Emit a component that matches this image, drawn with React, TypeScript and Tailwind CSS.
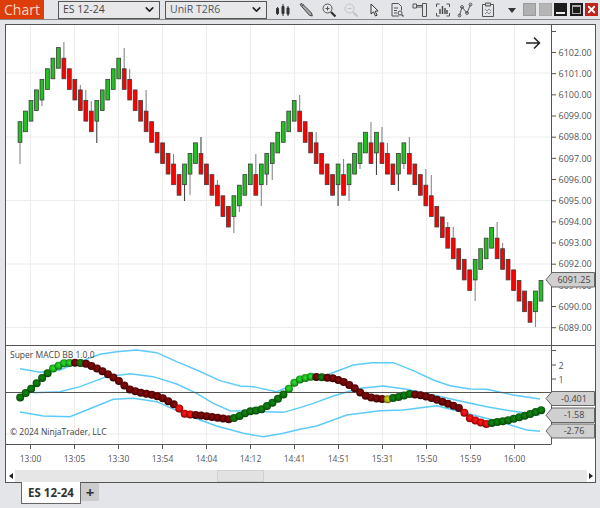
import { ChevronDown, X } from 'lucide-react';

const FONT = "font-['Open_Sans','Liberation_Sans',sans-serif]";

// one letter per bar, g = up bar, r = down bar
const BARS =
  'ggggggggrrrrrrgggggrrrrrrrrrrrgggrrrrrrggggrgggggggrrrrrrrgrggggrgrrrggrrrrrrrrrrrrggggrrrrrrrgg';
const BAR_X0 = 20;
const BAR_DX = 5.484;
const BAR_TOP0 = 121.7;
const STEP = 10.585;

// [bar index, wick end y, darker]
const WICKS: [number, number, boolean?][] = [
  [0, 164], [4, 106], [8, 42], [11, 85], [12, 90], [13, 101], [14, 143, true], [19, 48], [20, 69], [23, 90],
  [28, 154], [30, 201, true], [31, 195], [33, 137, true], [36, 180], [39, 233], [40, 212], [43, 154], [44, 206],
  [45, 185, true], [46, 180], [51, 95], [54, 132], [58, 206, true], [59, 159], [60, 201], [62, 169], [64, 122],
  [65, 175, true], [66, 127], [67, 143], [69, 191, true], [70, 169], [71, 137], [74, 169], [75, 175], [78, 222],
  [79, 227], [83, 301], [87, 222], [88, 243], [94, 327],
];

const GRID_X = [30.5, 74.5, 118.5, 162.5, 206.5, 250.5, 294.5, 338.5, 382.5, 426.5, 470.5, 514.5];
const TIMES = ['13:00', '13:05', '13:30', '13:54', '14:04', '14:12', '14:41', '14:51', '15:31', '15:50', '15:59', '16:00'];
const PRICES = [6102, 6101, 6100, 6099, 6098, 6097, 6096, 6095, 6094, 6093, 6092, 6091, 6090, 6089];
const priceY = (p: number) => 52.5 + (6102 - p) * 21.17;

const candles = (() => {
  let top = BAR_TOP0;
  return BARS.split('').map((c, i) => {
    if (i > 0) top += c === 'g' ? -STEP : STEP;
    return { i, up: c === 'g', x: BAR_X0 + i * BAR_DX, top };
  });
})();

type P = [number, number];
// points read off the 3x crops, so scaled back here
const crop = (ox: number, pts: P[]): P[] => pts.map(([x, y]) => [ox + x / 3, 340 + y / 3]);

const MACD: P[] = [
  ...crop(0, [[60, 173], [95, 145], [125, 115], [160, 85], [190, 70], [225, 68], [255, 70], [290, 85], [325, 103], [360, 125], [385, 147], [420, 158], [460, 165], [490, 175], [520, 192], [540, 207], [555, 222], [600, 226], [650, 233], [690, 238], [710, 232], [745, 215], [780, 210], [820, 187], [855, 160], [880, 130]]),
  ...crop(300, [[0, 118], [30, 110], [65, 112], [100, 115], [130, 125], [165, 145], [190, 165], [220, 175], [262, 178], [300, 170], [328, 162], [360, 165], [400, 175], [440, 190], [480, 205], [510, 235], [540, 247], [560, 252], [580, 248], [620, 242], [680, 226], [725, 210]]),
];

const BANDS: P[][] = [
  [
    ...crop(0, [[60, 86], [120, 97], [180, 90], [240, 65], [300, 43], [350, 35], [410, 30], [470, 38], [530, 65], [590, 90], [660, 122], [720, 138], [760, 140], [830, 155], [880, 135]]),
    ...crop(300, [[0, 122], [80, 105], [160, 75], [215, 68], [280, 68], [340, 92], [400, 120], [450, 137], [510, 147], [560, 148], [640, 165], [720, 177]]),
  ],
  [
    ...crop(0, [[100, 158], [180, 155], [240, 140], [320, 110], [390, 101], [460, 110], [530, 132], [590, 160], [640, 190], [690, 212], [790, 215], [850, 217]]),
    ...crop(300, [[0, 203], [40, 190], [100, 168], [180, 145], [250, 138], [320, 148], [400, 165], [480, 183], [560, 200], [630, 212], [720, 225]]),
  ],
  [
    ...crop(0, [[60, 216], [130, 228], [210, 230], [260, 210], [340, 178], [400, 175], [470, 185], [530, 212], [600, 240], [650, 258], [730, 280], [790, 290], [850, 280]]),
    ...crop(300, [[0, 268], [50, 258], [140, 225], [240, 212], [310, 210], [410, 197], [520, 225], [600, 245], [680, 270], [720, 274]]),
  ],
];

const macdY = (x: number) => {
  for (let i = 1; i < MACD.length; i++) {
    if (x <= MACD[i][0]) {
      const [x0, y0] = MACD[i - 1];
      const [x1, y1] = MACD[i];
      return y0 + ((x - x0) / (x1 - x0)) * (y1 - y0);
    }
  }
  return MACD[MACD.length - 1][1];
};

// dot colour runs, [last index, gradient id]
const DOT_RUNS: [number, string][] = [
  [5, 'dg'], [9, 'bg'], [10, 'dr'], [11, 'dg'], [28, 'dr'], [31, 'br'], [38, 'dr'], [48, 'dg'], [53, 'bg'],
  [54, 'dr'], [55, 'dg'], [66, 'dr'], [67, 'yl'], [71, 'dg'], [80, 'dr'], [85, 'br'], [95, 'dg'],
];
const dotColor = (i: number) => DOT_RUNS.find(([last]) => i <= last)?.[1] ?? 'dg';

const toPoints = (pts: P[]) => pts.map(([x, y]) => `${x.toFixed(1)},${y.toFixed(1)}`).join(' ');

const Label = ({ y, h, children }: { y: number; h: number; children: string }) => (
  <g>
    <polygon
      points={`546,${y + h / 2} 552,${y} 594.5,${y} 594.5,${y + h} 552,${y + h}`}
      fill="#d0d0d0"
      stroke="#666"
      strokeWidth="1"
    />
    <text x="574" y={y + h / 2 + 3.2} textAnchor="middle" fontSize="9" fill="#444">
      {children}
    </text>
  </g>
);

const PricePane = () => (
  <svg viewBox="6 25 589 320" className="block w-[589px] h-[320px]">
    {GRID_X.map((x) => (
      <line key={x} x1={x} x2={x} y1="25" y2="345" stroke="#ececec" />
    ))}
    {[73, 137, 200.5, 264, 327.5].map((y) => (
      <line key={y} x1="6" x2="551" y1={y} y2={y} stroke="#ececec" />
    ))}
    {WICKS.map(([i, y, dark]) => {
      const c = candles[i];
      return (
        <line
          key={i}
          x1={c.x}
          x2={c.x}
          y1={y}
          y2={c.top + 10}
          stroke={dark ? '#444' : '#888'}
          strokeWidth="1.1"
        />
      );
    })}
    {candles.map((c) => (
      <rect
        key={c.i}
        x={c.x - 1.9}
        y={c.top}
        width="3.8"
        height="20.6"
        fill={c.up ? '#22c022' : '#ff0000'}
        stroke="#3c3c3c"
        strokeWidth="0.8"
      />
    ))}
    <path d="M526 43h13M534 37.5l5.5 5.5-5.5 5.5" fill="none" stroke="#222" strokeWidth="1.5" />
    <line x1="551.5" x2="551.5" y1="25" y2="345" stroke="#555" />
    <line x1="551" x2="556" y1="31.5" y2="31.5" stroke="#555" />
    {PRICES.map((p) => (
      <g key={p}>
        <line x1="551" x2="556" y1={priceY(p)} y2={priceY(p)} stroke="#555" />
        <text x="558.5" y={priceY(p) + 3.2} fontSize="9" fill="#555">
          {p}.00
        </text>
      </g>
    ))}
    <Label y={272.5} h={14.5}>6091.25</Label>
  </svg>
);

const grad = (id: string, light: string, mid: string, edge: string) => (
  <radialGradient id={id} cx="0.5" cy="0.45" r="0.55" key={id}>
    <stop offset="0" stopColor={light} />
    <stop offset="0.65" stopColor={mid} />
    <stop offset="1" stopColor={edge} />
  </radialGradient>
);

const MacdPane = () => (
  <svg viewBox="6 346 589 98" className="block w-[589px] h-[99px] border-t border-[#555]">
    <defs>
      {grad('dg', '#128a12', '#0a6a0a', '#053a05')}
      {grad('bg', '#38e038', '#18b018', '#0a5a0a')}
      {grad('dr', '#8a0c0c', '#650404', '#300000')}
      {grad('br', '#ff2020', '#d40808', '#700000')}
      {grad('yl', '#d8d820', '#a8a810', '#505000')}
    </defs>
    {GRID_X.map((x) => (
      <line key={x} x1={x} x2={x} y1="345" y2="444" stroke="#ececec" />
    ))}
    {[350, 434].map((y) => (
      <line key={y} x1="6" x2="551" y1={y} y2={y} stroke="#ececec" />
    ))}
    {BANDS.map((b, i) => (
      <polyline key={i} points={toPoints(b)} fill="none" stroke="#5ccbfa" strokeWidth="1.4" />
    ))}
    <line x1="6" x2="551" y1="392.5" y2="392.5" stroke="#555" />
    <text x="10" y="358" fontSize="8.5" fill="#444">Super MACD BB 1.0.0</text>
    <text x="10" y="435" fontSize="8.5" fill="#444">© 2024 NinjaTrader, LLC</text>
    {candles.map((c) => {
      const x = c.x + 0.2;
      return <circle key={c.i} cx={x} cy={macdY(x)} r="4" fill={`url(#${dotColor(c.i)})`} />;
    })}
    <line x1="551.5" x2="551.5" y1="345" y2="444" stroke="#555" />
    {[350.5, 365, 379].map((y) => (
      <line key={y} x1="551" x2="556" y1={y} y2={y} stroke="#555" />
    ))}
    <text x="558.5" y="368.5" fontSize="9" fill="#555">2</text>
    <text x="558.5" y="382.5" fontSize="9" fill="#555">1</text>
    <Label y={391.5} h={14}>-0.401</Label>
    <Label y={408} h={14.5}>-1.58</Label>
    <Label y={424} h={14}>-2.76</Label>
  </svg>
);

const TimeAxis = () => (
  <svg viewBox="6 444 589 26" className="block w-[589px] h-[26px]">
    <line x1="6" x2="551.5" y1="444.5" y2="444.5" stroke="#555" />
    {GRID_X.map((x, i) => (
      <g key={x}>
        <line x1={x} x2={x} y1="444" y2="449" stroke="#555" />
        <text x={x} y="462" textAnchor="middle" fontSize="8.5" fill="#555">
          {TIMES[i]}
        </text>
      </g>
    ))}
  </svg>
);

const ScrollBar = () => (
  <div className="flex h-[12px] bg-[#e6e6e6]">
    <div className="flex w-[9px] items-center justify-center bg-white">
      <div className="h-0 w-0 border-y-[3px] border-r-[4px] border-y-transparent border-r-[#222]" />
    </div>
    <div className="ml-[202px] w-[47px] border border-[#d0d0d0] bg-[#e2e2e2]" />
    <div className="flex-1" />
    <div className="flex w-[8px] items-center justify-center bg-white">
      <div className="h-0 w-0 border-y-[3px] border-l-[4px] border-y-transparent border-l-[#222]" />
    </div>
  </div>
);

const Picker = ({ label, tint }: { label: string; tint: string }) => (
  <div className={`flex h-[18px] w-[102px] items-center justify-between border border-[#555] bg-[#e8e8ea] pl-[4px] pr-[3px] text-[10.5px] ${tint}`}>
    <span>{label}</span>
    <ChevronDown className="h-[13px] w-[13px] text-[#222]" strokeWidth={3} />
  </div>
);

const Tool = ({ children }: { children: React.ReactNode }) => (
  <svg viewBox="0 0 16 16" className="h-[16px] w-[16px] shrink-0" fill="none" stroke="#555" strokeWidth="1">
    {children}
  </svg>
);

const Toolbar = () => (
  <div className="flex h-[20px] items-center border-b border-[#888]">
    <div className="flex h-[19px] w-[44px] items-center justify-center self-start bg-[#dd3d08] text-[14px] text-[#f8d8c8]">
      Chart
    </div>
    <div className="ml-[14px] flex gap-[5px]">
      <Picker label="ES 12-24" tint="text-[#444]" />
      <Picker label="UniR T2R6" tint="text-[#4a5a68]" />
    </div>
    <div className="ml-[8px] flex items-center gap-[6.8px]">
      <Tool>
        <path d="M2.5 5v8M8 2v12M13 4v10" stroke="#333" />
        <path d="M1.5 6.5h2v5h-2zM7 4.5h2v7H7zM12 6h2v6h-2z" fill="#333" stroke="#333" />
      </Tool>
      <Tool>
        <path d="M2 2.5l2-1 9.5 9.5.8 3-3-.8z" fill="#aaa" stroke="#444" />
        <path d="M3.5 4.5l2-2" />
      </Tool>
      <Tool>
        <circle cx="6.5" cy="6.5" r="4.5" />
        <path d="M4.5 6.5h4M6.5 4.5v4" />
        <path d="M10 10l4.5 4.5" strokeWidth="2.2" stroke="#333" />
      </Tool>
      <Tool>
        <g stroke="#c4c4c4">
          <circle cx="6.5" cy="6.5" r="4.5" />
          <path d="M4.5 6.5h4" />
          <path d="M10 10l4.5 4.5" strokeWidth="2.2" />
        </g>
      </Tool>
      <Tool>
        <path d="M5 2v10l2.5-2.2 2 4.2 1.6-.8-2-4 3-.3z" fill="#eee" stroke="#333" />
      </Tool>
      <Tool>
        <path d="M3 1.5h6.5l3 3v4M3 1.5v12.5h7" />
        <path d="M5 6h4M5 8.5h3M5 11h3" />
        <circle cx="11" cy="11" r="2" />
        <path d="M12.5 12.5l2 2" strokeWidth="1.5" />
      </Tool>
      <Tool>
        <path d="M1 2h3.5v4H1zM4.5 3.5h6M4.5 5h6" />
        <path d="M10.5 1.5h4v13h-4z" />
      </Tool>
      <Tool>
        <path d="M1.5 5V2h3M14.5 5V2h-3M1.5 11v3h3M14.5 11v3h-3" />
        <path d="M5 7v5M7.5 4v8M10 6v6M12 8v4" strokeWidth="1.4" stroke="#444" />
      </Tool>
      <Tool>
        <path d="M2.5 13.5L5 5l5 6 3.5-8.5" />
        <circle cx="2.5" cy="13.5" r="1.4" />
        <circle cx="5" cy="5" r="1.4" />
        <circle cx="10" cy="11" r="1.4" />
        <circle cx="13.5" cy="2.5" r="1.4" />
      </Tool>
      <Tool>
        <path d="M2.5 2.5h11v12h-11z" />
        <path d="M5.5 1h5v3h-5z" fill="#ccc" />
        <path d="M5 7l2 2 2-2 2 2M5 12l2-2 2 2 2-2" stroke="#888" />
      </Tool>
    </div>
    <div className="ml-[12px] mt-[1px] h-0 w-0 border-x-[4px] border-t-[5px] border-x-transparent border-t-[#333]" />
    <div className="ml-[7px] flex gap-[2.5px]">
      <div className="h-[13px] w-[13px] border border-[#999] bg-[#b0b0b0]" />
      <div className="h-[13px] w-[13px] border border-[#aaa] bg-[#b6b6b6]" />
      <div className="flex h-[13px] w-[13px] items-end justify-center bg-[#1d1d1d] pb-[2px]">
        <div className="h-[2px] w-[9px] bg-[#eee]" />
      </div>
      <div className="flex h-[13px] w-[13px] items-center justify-center bg-[#1d1d1d]">
        <div className="h-[9px] w-[9px] border border-t-2 border-[#aaa]" />
      </div>
      <div className="flex h-[13px] w-[13px] items-center justify-center bg-[#c0241a]">
        <X className="h-[11px] w-[11px] text-white" strokeWidth={4} />
      </div>
    </div>
  </div>
);

export default function App() {
  return (
    <div className={`h-[508px] w-[600px] overflow-hidden bg-[#e4e5e8] ${FONT}`}>
      <Toolbar />
      <div className="ml-[5px] mt-[4px] h-[459px] w-[591px] border border-[#555] bg-white">
        <PricePane />
        <MacdPane />
        <TimeAxis />
        <ScrollBar />
      </div>
      <div className="-mt-[1px] flex pl-[21px]">
        <div className="relative flex h-[22px] w-[60px] items-center justify-center border-x border-b border-[#666] bg-white text-[11.5px] font-bold text-[#333]">
          ES 12-24
        </div>
        <div className="mt-[1px] flex h-[18px] w-[18px] items-center justify-center bg-[#ccc] text-[15px] font-bold text-[#333]">
          +
        </div>
      </div>
    </div>
  );
}
